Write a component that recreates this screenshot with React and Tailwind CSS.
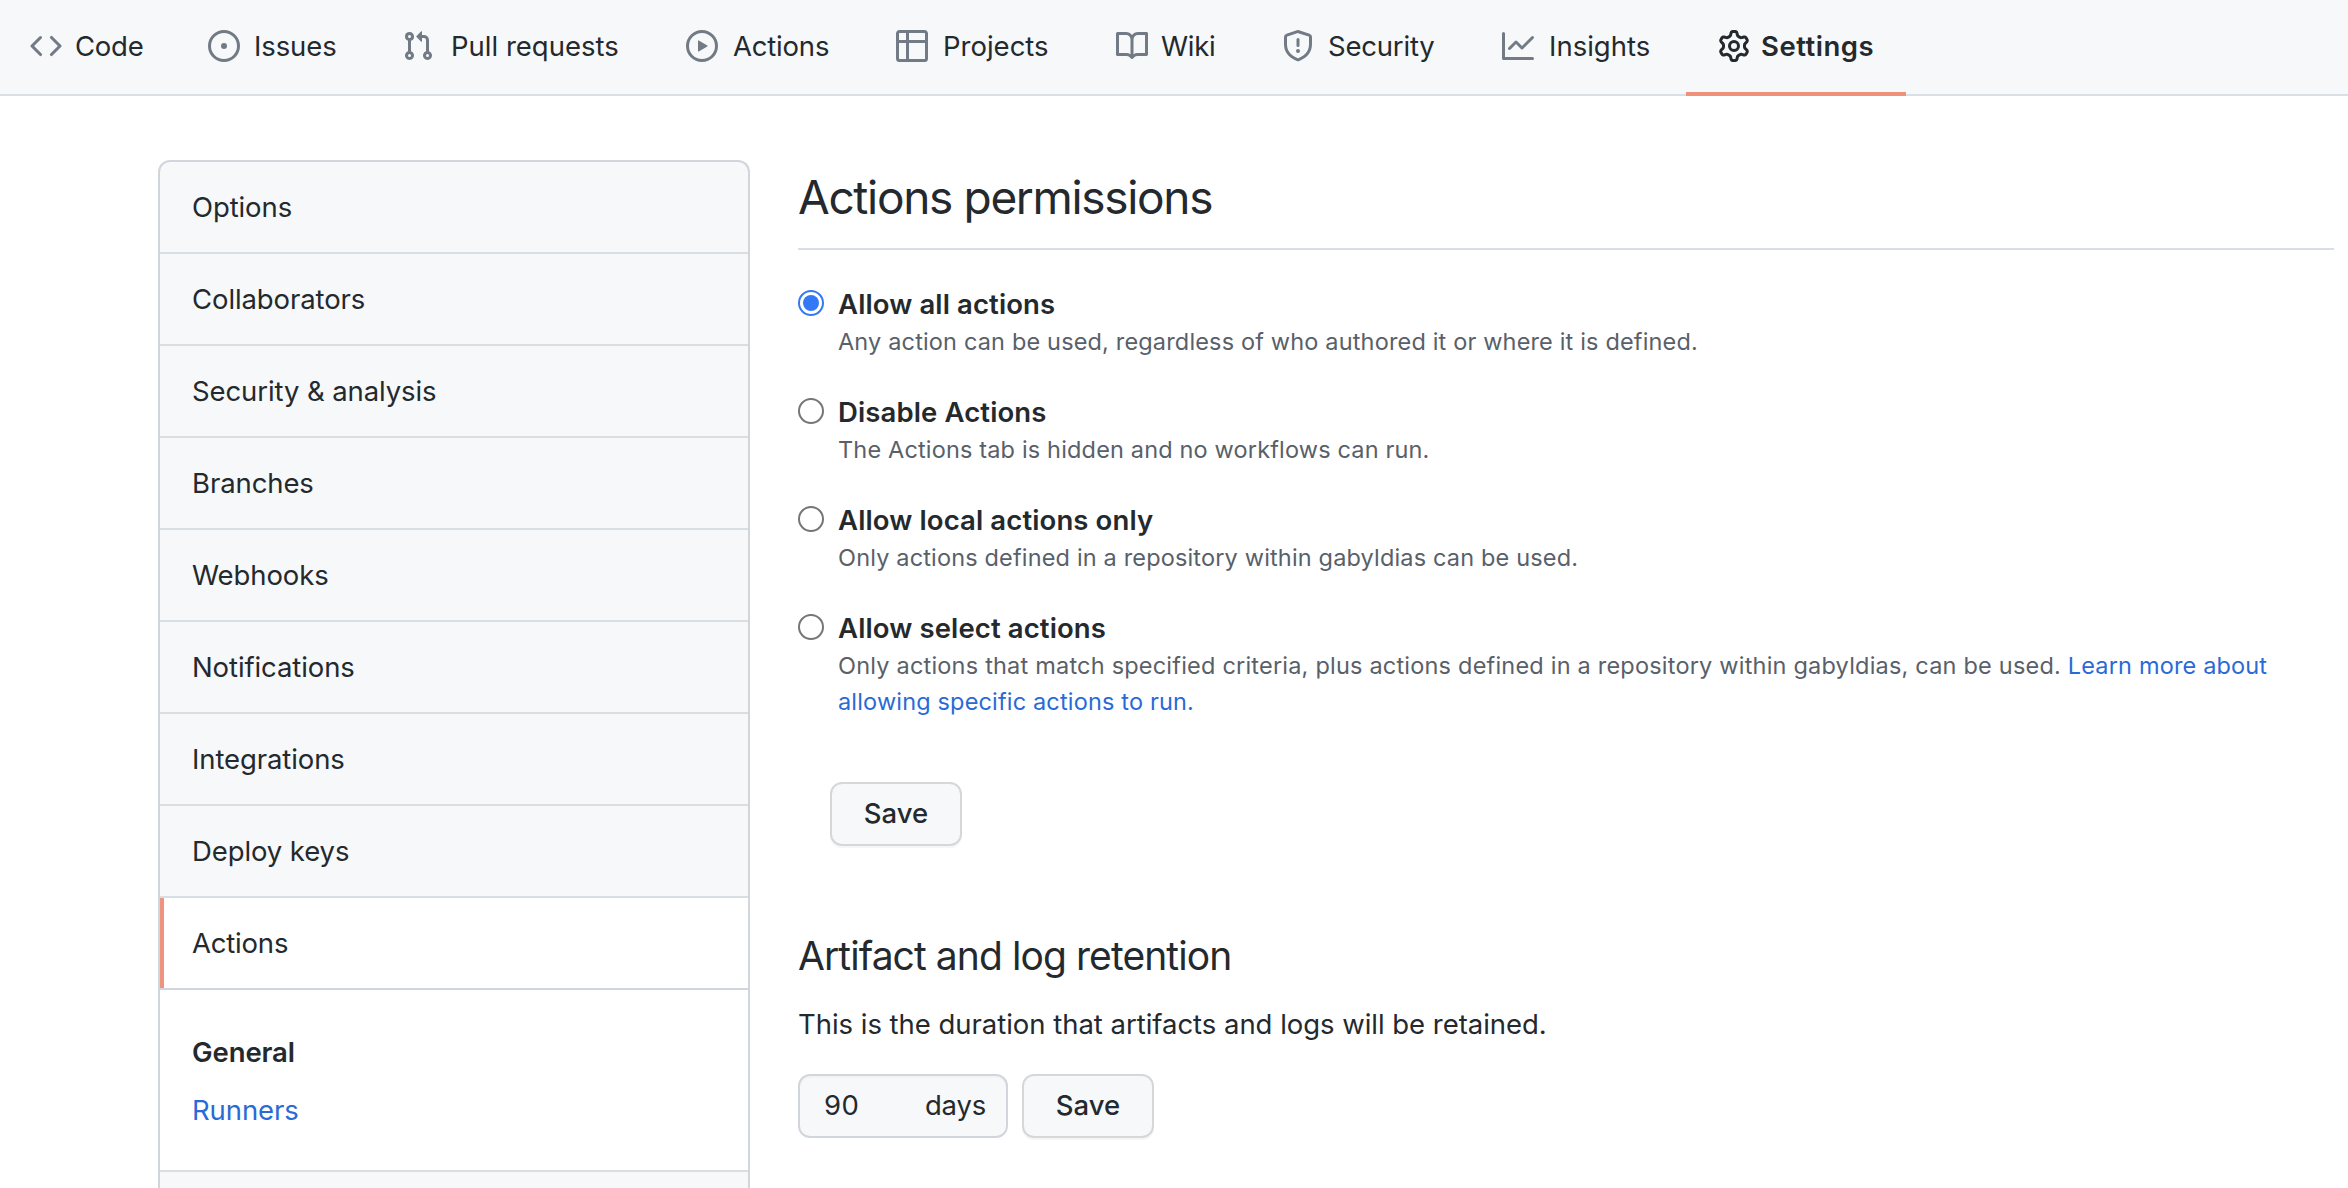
import React from "react";

const icons = {
  code: "M4.72 3.22a.75.75 0 011.06 1.06L2.06 8l3.72 3.72a.75.75 0 11-1.06 1.06L.47 8.53a.75.75 0 010-1.06l4.25-4.25zm6.56 0a.75.75 0 10-1.06 1.06L13.94 8l-3.72 3.72a.75.75 0 101.06 1.06l4.25-4.25a.75.75 0 000-1.06l-4.25-4.25z",
  issue: "M8 9.5a1.5 1.5 0 100-3 1.5 1.5 0 000 3zM8 0a8 8 0 100 16A8 8 0 008 0zM1.5 8a6.5 6.5 0 1113 0 6.5 6.5 0 01-13 0z",
  pull: "M7.177 3.073L9.573.677A.25.25 0 0110 .854v4.792a.25.25 0 01-.427.177L7.177 3.427a.25.25 0 010-.354zM3.75 2.5a.75.75 0 100 1.5.75.75 0 000-1.5zm-2.25.75a2.25 2.25 0 113 2.122v5.256a2.251 2.251 0 11-1.5 0V5.372A2.25 2.25 0 011.5 3.25zM11 2.5h-1V4h1a1 1 0 011 1v5.628a2.251 2.251 0 101.5 0V5A2.5 2.5 0 0011 2.5zm1 10.25a.75.75 0 111.5 0 .75.75 0 01-1.5 0zM3.75 12a.75.75 0 100 1.5.75.75 0 000-1.5z",
  play: "M1.5 8a6.5 6.5 0 1113 0 6.5 6.5 0 01-13 0zM8 0a8 8 0 100 16A8 8 0 008 0zM6.379 5.227A.25.25 0 006 5.442v5.117a.25.25 0 00.379.214l4.264-2.559a.25.25 0 000-.428L6.379 5.227z",
  table: "M0 1.75C0 .784.784 0 1.75 0h12.5C15.216 0 16 .784 16 1.75v3.585a.746.746 0 010 .83v8.085A1.75 1.75 0 0114.25 16H6.309a.748.748 0 01-1.118 0H1.75A1.75 1.75 0 010 14.25V6.165a.746.746 0 010-.83V1.75zM1.5 6.5v7.75c0 .138.112.25.25.25H5v-8H1.5zM6.5 6.5v8h7.75a.25.25 0 00.25-.25V6.5h-8zM14.5 5V1.75a.25.25 0 00-.25-.25H6.5V5h8zM5 5V1.5H1.75a.25.25 0 00-.25.25V5H5z",
  book: "M0 1.75A.75.75 0 01.75 1h4.253c1.227 0 2.317.59 3 1.501A3.744 3.744 0 0111.006 1h4.245a.75.75 0 01.75.75v10.5a.75.75 0 01-.75.75h-4.507a2.25 2.25 0 00-1.591.659l-.622.621a.75.75 0 01-1.06 0l-.622-.621A2.25 2.25 0 005.258 13H.75a.75.75 0 01-.75-.75V1.75zm8.755 3a2.25 2.25 0 012.25-2.25H14.5v9h-3.757c-.71 0-1.4.201-1.992.572l.004-7.322zm-1.504 7.324l.004-5.073-.002-2.253A2.25 2.25 0 005.003 2.5H1.5v9h3.757a3.75 3.75 0 011.994.574z",
  shield: "M7.467.133a1.75 1.75 0 011.066 0l5.25 1.68A1.75 1.75 0 0115 3.48V7c0 1.566-.32 3.182-1.303 4.682-.983 1.498-2.585 2.813-5.032 3.855a1.7 1.7 0 01-1.33 0c-2.447-1.042-4.049-2.357-5.032-3.855C1.32 10.182 1 8.566 1 7V3.48a1.75 1.75 0 011.217-1.667l5.25-1.68zm.61 1.429a.25.25 0 00-.153 0l-5.25 1.68a.25.25 0 00-.174.238V7c0 1.358.275 2.666 1.057 3.86.784 1.194 2.121 2.34 4.366 3.297a.2.2 0 00.154 0c2.245-.956 3.582-2.104 4.366-3.298C13.225 9.666 13.5 8.36 13.5 7V3.48a.25.25 0 00-.174-.237l-5.25-1.68zM9 10.5a1 1 0 11-2 0 1 1 0 012 0zm-.25-5.75a.75.75 0 10-1.5 0v3a.75.75 0 001.5 0v-3z",
  graph: "M1.5 1.75a.75.75 0 00-1.5 0v12.5c0 .414.336.75.75.75h14.5a.75.75 0 000-1.5H1.5V1.75zm14.28 2.53a.75.75 0 00-1.06-1.06L10 7.94 7.53 5.47a.75.75 0 00-1.06 0L3.22 8.72a.75.75 0 001.06 1.06L7 7.06l2.47 2.47a.75.75 0 001.06 0l5.25-5.25z",
  gear: "M7.429 1.525a6.593 6.593 0 011.142 0c.036.003.108.036.137.146l.289 1.105c.147.56.55.967.997 1.189.174.086.341.183.501.29.417.278.97.423 1.53.27l1.102-.303c.11-.03.175.016.195.046.219.31.41.641.573.989.014.031.022.11-.059.19l-.815.806c-.411.406-.562.957-.53 1.456a4.588 4.588 0 010 .582c-.032.499.119 1.05.53 1.456l.815.806c.08.08.073.159.059.19a6.494 6.494 0 01-.573.99c-.02.029-.086.074-.195.045l-1.103-.303c-.559-.153-1.112-.008-1.529.27-.16.107-.327.204-.5.29-.449.222-.851.628-.998 1.189l-.289 1.105c-.029.11-.101.143-.137.146a6.613 6.613 0 01-1.142 0c-.036-.003-.108-.037-.137-.146l-.289-1.105c-.147-.56-.55-.967-.997-1.189a4.502 4.502 0 01-.501-.29c-.417-.278-.97-.423-1.53-.27l-1.102.303c-.11.03-.175-.016-.195-.046a6.492 6.492 0 01-.573-.989c-.014-.031-.022-.11.059-.19l.815-.806c.411-.406.562-.957.53-1.456a4.587 4.587 0 010-.582c.032-.499-.119-1.05-.53-1.456l-.815-.806c-.08-.08-.073-.159-.059-.19a6.44 6.44 0 01.573-.99c.02-.029.086-.075.195-.045l1.103.303c.559.153 1.112.008 1.529-.27.16-.107.327-.204.5-.29.449-.222.851-.628.998-1.189l.289-1.105c.029-.11.101-.143.137-.146zM8 0c-.236 0-.47.01-.701.03-.743.065-1.29.615-1.458 1.261l-.29 1.106c-.017.066-.078.158-.211.224a5.994 5.994 0 00-.668.386c-.123.082-.233.09-.3.071L3.27 2.776c-.644-.177-1.392.02-1.82.63a7.977 7.977 0 00-.704 1.217c-.315.675-.111 1.422.363 1.891l.815.806c.05.048.098.147.088.294a6.084 6.084 0 000 .772c.01.147-.038.246-.088.294l-.815.806c-.474.469-.678 1.216-.363 1.891.2.428.436.835.704 1.218.428.609 1.176.806 1.82.63l1.103-.303c.066-.019.176-.011.299.071.213.143.436.272.668.386.133.066.194.158.212.224l.289 1.106c.169.646.715 1.196 1.458 1.26a8.094 8.094 0 001.402 0c.743-.064 1.29-.614 1.458-1.26l.29-1.106c.017-.066.078-.158.211-.224a5.98 5.98 0 00.668-.386c.123-.082.233-.09.3-.071l1.102.302c.644.177 1.392-.02 1.82-.63.268-.382.505-.789.704-1.217.315-.675.111-1.422-.364-1.891l-.814-.806c-.05-.048-.098-.147-.088-.294a6.1 6.1 0 000-.772c-.01-.147.039-.246.088-.294l.814-.806c.475-.469.679-1.216.364-1.891a7.992 7.992 0 00-.704-1.218c-.428-.609-1.176-.806-1.82-.63l-1.103.303c-.066.019-.176.011-.299-.071a5.991 5.991 0 00-.668-.386c-.133-.066-.194-.158-.212-.224L10.16 1.29C9.99.645 9.444.095 8.701.031A8.094 8.094 0 008 0zm1.5 8a1.5 1.5 0 11-3 0 1.5 1.5 0 013 0zM11 8a3 3 0 11-6 0 3 3 0 016 0z",
};

function Icon({ name, className }) {
  return (
    <svg viewBox="0 0 16 16" className={`size-8 shrink-0 ${className}`} fill="currentColor" fillRule="evenodd">
      <path d={icons[name]} />
    </svg>
  );
}

const tabs = [
  { label: "Code", icon: "code", item: "w-[178px] gap-[13px] tracking-[-0.25px]" },
  { label: "Issues", icon: "issue", item: "w-[194px] gap-[14px] tracking-[-0.1px]" },
  { label: "Pull requests", icon: "pull", item: "w-[284px] gap-[17px]" },
  { label: "Actions", icon: "play", item: "w-[210px] gap-[15px] tracking-[-0.2px]" },
  { label: "Projects", icon: "table", item: "w-[220px] gap-[15px]" },
  { label: "Wiki", icon: "book", item: "w-[166px] gap-[13px] tracking-[-0.3px]" },
  { label: "Security", icon: "shield", item: "w-[220px] gap-[14px] tracking-[-0.2px]" },
  { label: "Insights", icon: "graph", item: "w-[216px] gap-[15px]" },
];

function Header() {
  return (
    <nav className="flex h-24 items-stretch border-b-2 border-[#d8dfe5] bg-[#f6f8fa]">
      <div className="-ml-0.5 flex">
        {tabs.map((t) => (
          <a key={t.label} className={`flex items-center whitespace-nowrap pb-0.5 pl-8 ${t.item}`}>
            <Icon name={t.icon} className="text-[#727a85]" />
            <span className="pt-0.5">{t.label}</span>
          </a>
        ))}
        <a className="-mb-0.5 flex w-[220px] items-center gap-[11px] border-b-4 border-[#f0917c] pl-8 font-semibold tracking-[0.5px]">
          <Icon name="gear" className="text-[#24292e]" />
          <span className="pt-0.5">Settings</span>
        </a>
      </div>
    </nav>
  );
}

const menu = [
  "Options",
  "Collaborators",
  "Security & analysis",
  "Branches",
  "Webhooks",
  "Notifications",
  "Integrations",
  "Deploy keys",
];

function Sidebar() {
  return (
    <aside className="flex h-[1100px] w-[592px] shrink-0 flex-col overflow-hidden rounded-t-xl border-2 border-b-0 border-[#d1d6dd] bg-[#f6f8fa]">
      {menu.map((m) => (
        <a key={m} className="flex h-[92px] shrink-0 items-center border-b-2 border-[#d8dfe4] pl-8 pt-0.5 tracking-[-0.1px]">
          {m}
        </a>
      ))}
      <a className="flex h-[92px] shrink-0 border-b-2 border-[#d1d6dc] bg-white">
        <span className="h-full w-1 bg-[#ee937e]" />
        <span className="flex items-center pl-7 pt-0.5 tracking-[-0.2px]">Actions</span>
      </a>
      <div className="flex h-[182px] shrink-0 flex-col gap-4 border-b-2 border-[#d8dfe4] bg-white pl-8 pt-[41px] leading-[42px] tracking-[-0.1px]">
        <span className="font-semibold">General</span>
        <a className="text-[#2a6ad7]">Runners</a>
      </div>
    </aside>
  );
}

function Radio({ checked }) {
  return checked ? (
    <span className="mt-[7px] flex size-[26px] shrink-0 items-center justify-center rounded-full border-2 border-[#3478f6] bg-white">
      <span className="size-4 rounded-full bg-[#3478f6]" />
    </span>
  ) : (
    <span className="mt-[7px] size-[26px] shrink-0 rounded-full border-2 border-[#767676] bg-white" />
  );
}

function Option({ title, checked, children }) {
  return (
    <label className="flex gap-3.5">
      <Radio checked={checked} />
      <span className="flex flex-col">
        <span className="font-semibold leading-[42px] tracking-[0.12px]">{title}</span>
        <span className="-mt-px w-[1460px] text-[23.5px] leading-9 tracking-[0.16px] text-[#586069]">{children}</span>
      </span>
    </label>
  );
}

function SaveButton() {
  return (
    <button className="flex h-16 w-[132px] items-center justify-center rounded-xl border-2 border-[#d5d8da] bg-[#f6f8fa] font-medium shadow-[0_2px_0_rgba(27,31,35,0.04)]">
      Save
    </button>
  );
}

export default function App() {
  return (
    <div className="h-[1188px] w-[2348px] overflow-hidden bg-white font-['Inter',sans-serif] text-[27.5px] text-[#24292e]">
      <Header />
      <div className="flex gap-12 pl-[158px] pt-16">
        <Sidebar />
        <main className="w-[1536px]">
          <h2 className="h-[90px] border-b-2 border-[#d8dee4] pt-px text-[46px] leading-[72px] tracking-[-1.33px]">
            Actions permissions
          </h2>
          <div className="mt-[33px] flex flex-col gap-[31px]">
            <Option title="Allow all actions" checked>
              Any action can be used, regardless of who authored it or where it is defined.
            </Option>
            <Option title="Disable Actions">The Actions tab is hidden and no workflows can run.</Option>
            <Option title="Allow local actions only">
              Only actions defined in a repository within gabyldias can be used.
            </Option>
            <Option title="Allow select actions">
              <span className="tracking-[0.205px]">
                Only actions that match specified criteria, plus actions defined in a repository within gabyldias, can
                be used.{" "}
              </span>
              <a className="text-[#2a6ad7]">
                Learn more about
                <br />
                allowing specific actions to run.
              </a>
            </Option>
          </div>
          <div className="mt-[62px] pl-8">
            <SaveButton />
          </div>
          <h3 className="mt-20 text-[39px] leading-[60px] tracking-[-0.92px]">Artifact and log retention</h3>
          <p className="mt-[17px] leading-[42px] tracking-[-0.03px]">
            This is the duration that artifacts and logs will be retained.
          </p>
          <div className="mt-[29px] flex gap-3.5">
            <div className="flex h-16 w-[210px] items-center justify-between rounded-xl border-2 border-[#d1d6dd] bg-[#f6f8fa] pl-6 pr-5 shadow-[inset_0_2px_0_rgba(225,228,232,0.2)]">
              <span className="tracking-[0.4px]">90</span>
              <span className="tracking-[-0.2px]">days</span>
            </div>
            <SaveButton />
          </div>
        </main>
      </div>
    </div>
  );
}
